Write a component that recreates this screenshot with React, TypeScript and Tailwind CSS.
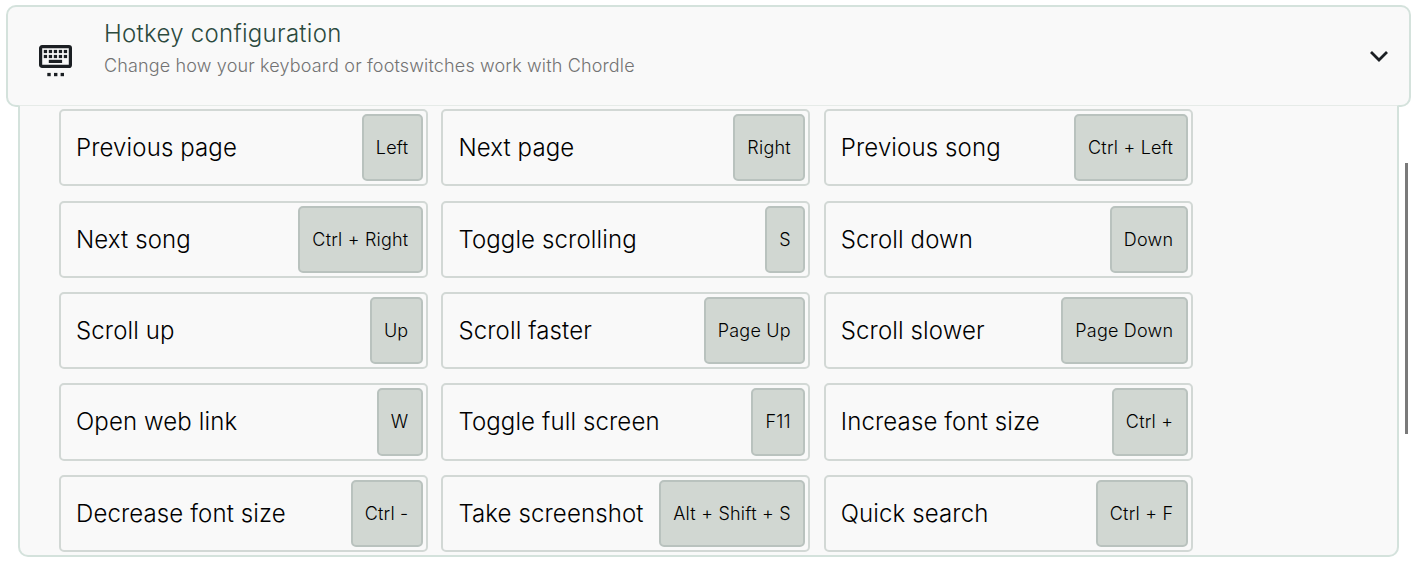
import { Fragment } from "react";

const hotkeys = [
  { action: "Previous page", keys: "Left" },
  { action: "Next page", keys: "Right" },
  { action: "Previous song", keys: "Ctrl + Left" },
  { action: "Next song", keys: "Ctrl + Right" },
  { action: "Toggle scrolling", keys: "S" },
  { action: "Scroll down", keys: "Down" },
  { action: "Scroll up", keys: "Up" },
  { action: "Scroll faster", keys: "Page Up" },
  { action: "Scroll slower", keys: "Page Down" },
  { action: "Open web link", keys: "W" },
  { action: "Toggle full screen", keys: "F11" },
  { action: "Increase font size", keys: "Ctrl +" },
  { action: "Decrease font size", keys: "Ctrl -" },
  { action: "Take screenshot", keys: "Alt + Shift + S" },
  { action: "Quick search", keys: "Ctrl + F" },
];

const keyColumns = [4.8, 9.8, 14.8, 19.8, 24.8];

function KeyboardIcon() {
  return (
    <svg width="33" height="32" viewBox="0 0 33 32" fill="#1b1f23">
      <rect x="1.6" y="1.6" width="29.8" height="19.8" rx="1.5" fill="none" stroke="#1b1f23" strokeWidth="3.2" />
      {keyColumns.map((x) => (
        <Fragment key={x}>
          <rect x={x} y="4.9" width="3.3" height="3.2" />
          <rect x={x} y="9.9" width="3.3" height="3.2" />
        </Fragment>
      ))}
      <rect x="9.8" y="14.8" width="13.3" height="3.2" />
      <rect x="8.3" y="27.9" width="3.4" height="3.3" />
      <rect x="15" y="27.9" width="3.4" height="3.3" />
      <rect x="21.6" y="27.9" width="3.4" height="3.3" />
    </svg>
  );
}

export default function App() {
  return (
    <div className="flex h-[574px] w-[1421px] overflow-hidden bg-white pt-[5px] pl-[6px] font-['Inter',sans-serif] font-light">
      <div className="w-[1405px] shrink-0">
        <div className="flex h-[102px] rounded-[10px] border-2 border-[#d4e2dc] bg-[#f9f9f9]">
          <div className="mt-[38px] ml-[31px] w-[65px]">
            <KeyboardIcon />
          </div>
          <div className="mt-[11px] flex-1">
            <h2 className="text-[24px] leading-[31px] tracking-[0.28px] text-[#2c4a3e]">
              Hotkey configuration
            </h2>
            <p className="mt-px text-[18px] leading-[32px] tracking-[0.15px] text-[#737373]">
              Change how your keyboard or footswitches work with Chordle
            </p>
          </div>
          <svg className="mt-[43px] mr-[20px]" width="20" height="12" viewBox="0 0 20 12" fill="none">
            <path d="M2 2L10 10L18 2" stroke="#1b1f23" strokeWidth="2.8" />
          </svg>
        </div>

        {/* expanded body, overlaps the header's bottom border */}
        <div className="relative mx-[12px] -mt-[2px] h-[452px] rounded-b-[10px] border-x-2 border-t border-b-2 border-[#d4e2dc] border-t-[#e6ebe8] bg-[#f9f9f9] pt-[3.2px] pl-[39px]">
          <div className="grid grid-cols-[369px_369px_369px] gap-x-[13.4px] gap-y-[14.2px]">
            {hotkeys.map((hotkey) => (
              <div
                key={hotkey.action}
                className="flex h-[77.2px] items-stretch justify-between rounded-[5px] border-2 border-[#d2d8d5] p-[3px] pl-[15px]"
              >
                <span className="self-center text-[24px] leading-[33px] font-[330] tracking-[0.12px] whitespace-nowrap text-black">
                  {hotkey.action}
                </span>
                <kbd className="flex items-center rounded-[5px] border-2 border-[#b9c2be] bg-[#d1d7d2] pr-[12.6px] pl-[12px] font-['Inter',sans-serif] text-[18px] tracking-[0.2px] whitespace-nowrap text-black">
                  {hotkey.keys}
                </kbd>
              </div>
            ))}
          </div>
        </div>
      </div>

      <div className="mt-[158px] -ml-[6px] h-[271px] w-[3px] shrink-0 bg-[#7a7a7a]" />
    </div>
  );
}
